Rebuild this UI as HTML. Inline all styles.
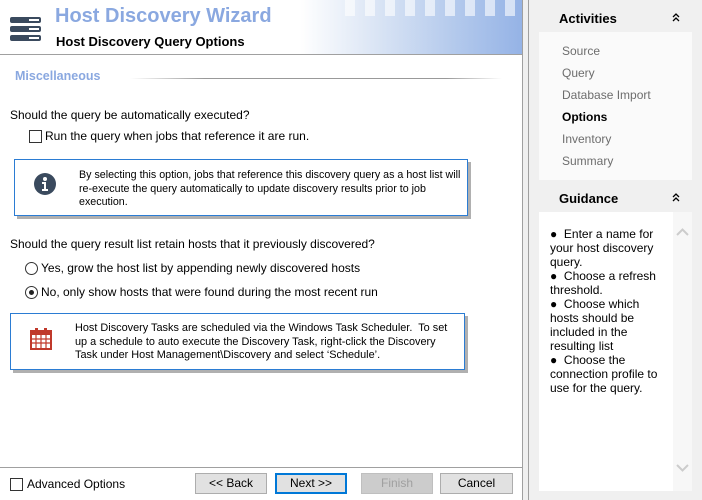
<!DOCTYPE html>
<html><head><style>
*{margin:0;padding:0;box-sizing:border-box}
body{width:702px;height:500px;position:relative;background:#f0f0f0;font-family:"Liberation Sans",sans-serif;font-size:12px;color:#000;overflow:hidden}
.a{position:absolute}
#main{left:0;top:0;width:523px;height:500px;background:#fff;border-right:1px solid #a0a0a0}
.box{position:absolute;background:#fff;border:1px solid #2b7cd3;box-shadow:3px 3px 0 #b0b0b0}
.t{position:absolute;white-space:nowrap}
.chk{position:absolute;width:13px;height:13px;border:1px solid #333;background:#fff}
.rad{position:absolute;width:13px;height:13px;border:1px solid #333;border-radius:50%;background:#fff}
.btn{position:absolute;top:473px;height:21px;border:1px solid #adadad;background:#e1e1e1;text-align:center;line-height:19px}
.nav{position:absolute;left:562px;color:#6d6d6d}
</style></head><body>
<div id="main" class="a">
 <div class="a" style="left:300px;top:0;width:222px;height:54px;background:linear-gradient(90deg,#fff 0%,#dfe8f6 30%,#b3c9ec 70%,#95b3e6 100%)"></div>
 <div class="a" style="left:345px;top:0;width:170px;height:16px;background:repeating-linear-gradient(90deg,rgba(255,255,255,.6) 0 10px,transparent 10px 20px)"></div>
 <div class="a" style="left:0;top:54px;width:522px;height:1px;background:#a0a0a0"></div>
 <div class="a" style="left:10px;top:17px;width:31px;height:6px;background:#3a4a5e;border-radius:2px"></div>
 <div class="a" style="left:10px;top:26px;width:31px;height:6px;background:#3a4a5e;border-radius:2px"></div>
 <div class="a" style="left:10px;top:35px;width:31px;height:6px;background:#3a4a5e;border-radius:2px"></div>
 <div class="a" style="left:29px;top:19px;width:10px;height:2px;background:#fff"></div>
 <div class="a" style="left:29px;top:28px;width:10px;height:2px;background:#fff"></div>
 <div class="a" style="left:29px;top:37px;width:10px;height:2px;background:#fff"></div>
 <div class="t" style="left:55px;top:5px;font-size:20px;font-weight:bold;color:#8aa8e0">Host Discovery Wizard</div>
 <div class="t" style="left:56px;top:34px;font-size:13px;font-weight:bold">Host Discovery Query Options</div>
 <div class="t" style="left:15px;top:69px;font-size:12.5px;font-weight:bold;color:#8aa8e0">Miscellaneous</div>
 <div class="a" style="left:130px;top:78px;width:372px;height:1px;background:linear-gradient(90deg,#fff,#999 20%,#999 85%,#fff)"></div>
 <div class="t" style="left:10px;top:108px">Should the query be automatically executed?</div>
 <div class="chk" style="left:29px;top:130px"></div>
 <div class="t" style="left:45px;top:129px">Run the query when jobs that reference it are run.</div>
 <div class="box" style="left:14px;top:159px;width:454px;height:57px"></div>
 <svg class="a" style="left:33px;top:172px" width="24" height="24"><circle cx="12" cy="12" r="11" fill="#3a4a5e"/><circle cx="12" cy="7" r="2" fill="#fff"/><path d="M9 10h4v7h2v2H9v-2h2v-5H9z" fill="#fff"/></svg>
 <div class="t" style="left:79px;top:169px;line-height:13.5px;font-size:10.7px">By selecting this option, jobs that reference this discovery query as a host list will<br>re-execute the query automatically to update discovery results prior to job<br>execution.</div>
 <div class="t" style="left:10px;top:237px">Should the query result list retain hosts that it previously discovered?</div>
 <div class="rad" style="left:25px;top:262px"></div>
 <div class="t" style="left:41px;top:261px">Yes, grow the host list by appending newly discovered hosts</div>
 <div class="rad" style="left:25px;top:286px"><div class="a" style="left:3px;top:3px;width:5px;height:5px;border-radius:50%;background:#222"></div></div>
 <div class="t" style="left:41px;top:285px">No, only show hosts that were found during the most recent run</div>
 <div class="box" style="left:10px;top:313px;width:455px;height:57px"></div>
 <svg class="a" style="left:30px;top:328px" width="22" height="22"><rect x="1" y="3" width="20" height="18" fill="none" stroke="#c0392b" stroke-width="2"/><rect x="1" y="3" width="20" height="4" fill="#c0392b"/><rect x="5" y="0" width="3" height="5" fill="#c0392b"/><rect x="14" y="0" width="3" height="5" fill="#c0392b"/><path d="M1 11h20M1 15h20M6 7v14M11 7v14M16 7v14" stroke="#c0392b" stroke-width="1.2"/></svg>
 <div class="t" style="left:75px;top:322px;line-height:13.5px;font-size:10.9px">Host Discovery Tasks are scheduled via the Windows Task Scheduler.&nbsp; To set<br>up a schedule to auto execute the Discovery Task, right-click the Discovery<br>Task under Host Management\Discovery and select ‘Schedule’.</div>
 <div class="a" style="left:0;top:467px;width:522px;height:1px;background:#a0a0a0"></div>
 <div class="chk" style="left:10px;top:478px"></div>
 <div class="t" style="left:27px;top:477px">Advanced Options</div>
 <div class="btn" style="left:195px;width:72px">&lt;&lt; Back</div>
 <div class="btn" style="left:275px;width:72px;border:2px solid #0078d7;line-height:17px">Next &gt;&gt;</div>
 <div class="btn" style="left:361px;width:72px;color:#a0a0a0;background:#ccc;border-color:#bfbfbf">Finish</div>
 <div class="btn" style="left:440px;width:73px">Cancel</div>
</div>
<div class="a" style="left:528px;top:0;width:1px;height:500px;background:#a0a0a0"></div>
<div class="t" style="left:559px;top:11px;font-size:13px;font-weight:bold">Activities</div>
<svg class="a" style="left:672px;top:13px" width="8" height="9"><path d="M1 4l3-3 3 3M1 8l3-3 3 3" fill="none" stroke="#000" stroke-width="1.3"/></svg>
<div class="a" style="left:539px;top:32px;width:153px;height:148px;background:#fafafa"></div>
<div class="nav" style="top:44px">Source</div>
<div class="nav" style="top:66px">Query</div>
<div class="nav" style="top:88px">Database Import</div>
<div class="nav" style="top:110px;color:#000;font-weight:bold">Options</div>
<div class="nav" style="top:132px">Inventory</div>
<div class="nav" style="top:154px">Summary</div>
<div class="t" style="left:559px;top:191px;font-size:13px;font-weight:bold">Guidance</div>
<svg class="a" style="left:672px;top:193px" width="8" height="9"><path d="M1 4l3-3 3 3M1 8l3-3 3 3" fill="none" stroke="#000" stroke-width="1.3"/></svg>
<div class="a" style="left:539px;top:212px;width:153px;height:279px;background:#fff"></div>
<div class="a" style="left:673px;top:212px;width:19px;height:279px;background:#f7f7f7"></div>
<svg class="a" style="left:676px;top:228px" width="13" height="8"><path d="M1 7l5.5-5.5L12 7" fill="none" stroke="#ccc" stroke-width="2"/></svg>
<svg class="a" style="left:676px;top:464px" width="13" height="8"><path d="M1 1l5.5 5.5L12 1" fill="none" stroke="#ccc" stroke-width="2"/></svg>
<div class="t" style="left:550px;top:227px;font-size:12px;line-height:14px">●&nbsp; Enter a name for<br>your host discovery<br>query.<br>●&nbsp; Choose a refresh<br>threshold.<br>●&nbsp; Choose which<br>hosts should be<br>included in the<br>resulting list<br>●&nbsp; Choose the<br>connection profile to<br>use for the query.</div>
</body></html>
